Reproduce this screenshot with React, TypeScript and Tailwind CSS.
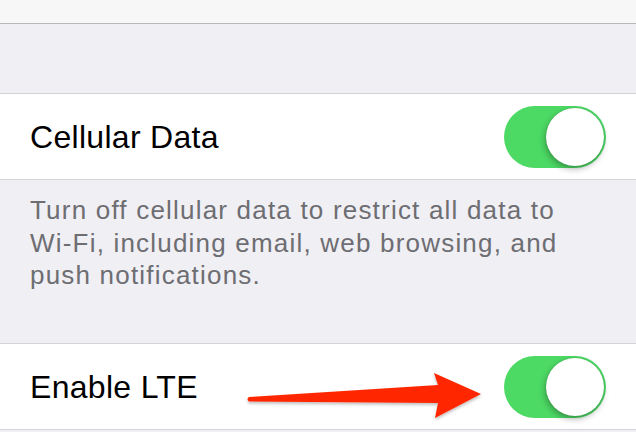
import React from "react";

function Toggle() {
  return (
    <div className="relative h-[62px] w-[102px] shrink-0 rounded-full bg-[#4cd964]">
      <div className="absolute right-[2px] top-[2px] h-[58px] w-[58px] rounded-full bg-white shadow-[-1px_3px_6px_rgba(0,0,0,0.3),0_0_1px_rgba(0,0,0,0.25)]" />
    </div>
  );
}

function Row({ label, children }: { label: string; children?: React.ReactNode }) {
  return (
    <div className="relative flex h-[87px] items-center justify-between border-y border-[#d4d3d8] bg-white pl-[30px] pr-[30px]">
      <span className="text-[32px] tracking-[0.3px] text-black">{label}</span>
      {children}
      <Toggle />
    </div>
  );
}

function Arrow() {
  return (
    <svg
      className="absolute left-0 top-0"
      width="636"
      height="432"
      viewBox="0 0 636 432"
      style={{ pointerEvents: "none" }}
    >
      <defs>
        <filter id="sh" x="-10%" y="-50%" width="120%" height="200%">
          <feDropShadow dx="0" dy="2" stdDeviation="1.5" floodColor="#000" floodOpacity="0.25" />
        </filter>
      </defs>
      <path
        d="M249 396 L438 384 L434 372 L481 393 L435 417 L438 402 L249 400.5 Q246 398.2 249 396 Z"
        fill="#ff2800"
        filter="url(#sh)"
        transform="translate(0,-343)"
      />
    </svg>
  );
}

export default function App() {
  return (
    <div
      className="h-[432px] w-[636px] overflow-hidden bg-[#efeff4]"
      style={{ fontFamily: '"Liberation Sans", Arial, sans-serif' }}
    >
      <div className="h-[24px] border-b border-[#b9b9bd] bg-[#f7f7f7]" />
      <div className="h-[69px]" />
      <Row label="Cellular Data" />
      <div className="h-[163px] pl-[30px] pt-[14px] text-[26px] leading-[32.5px] tracking-[1.2px] text-[#6d6d72]">
        Turn off cellular data to restrict all data to
        <br />
        Wi-Fi, including email, web browsing, and
        <br />
        push notifications.
      </div>
      <Row label="Enable LTE">
        <Arrow />
      </Row>
    </div>
  );
}
